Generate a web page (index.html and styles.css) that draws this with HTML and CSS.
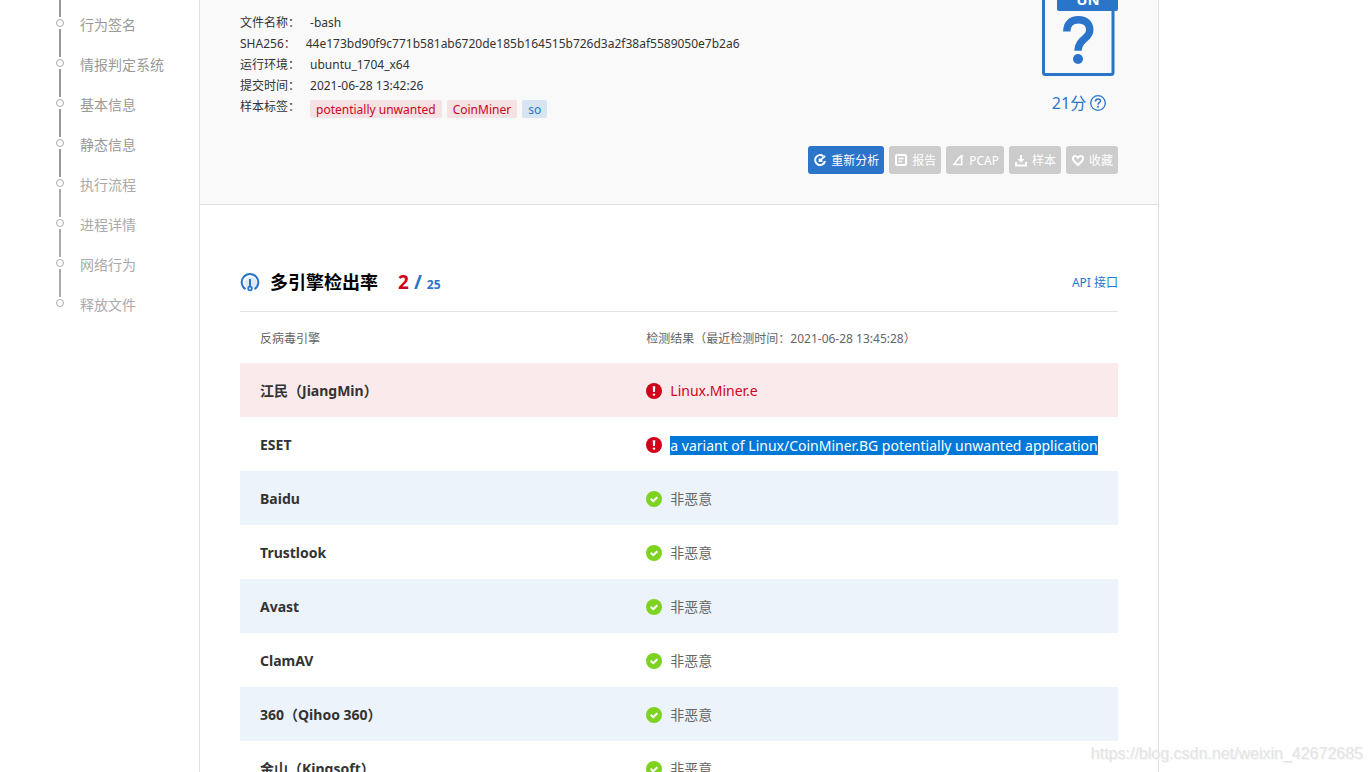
FILE: index.html
```html
<!DOCTYPE html>
<html lang="zh-CN">
<head>
<meta charset="utf-8">
<meta name="viewport" content="width=device-width, initial-scale=1">
<title>多引擎检出率</title>
<link rel="stylesheet" href="styles.css">
</head>
<body>
<svg class="sprite" aria-hidden="true">
  <symbol id="bad" viewBox="0 0 16 16"><circle cx="8" cy="8" r="8" fill="#d0021b"/><path d="M6.700 3.200h2.600l-.4 5.900H7.100z" fill="#fff"/><circle cx="8" cy="11.600" r="1.200" fill="#fff"/></symbol>
  <symbol id="good" viewBox="0 0 16 16"><circle cx="8" cy="8" r="8" fill="#7ed321"/><path d="M4.700 7.800l2.500 2.400 4.200-4" fill="none" stroke="#fff" stroke-width="2"/></symbol>
</svg>
<div class="page">
  <nav class="side">
    <div class="side-lead"></div>
    <ul class="steps">
      <li class="step"><a href="#">行为签名</a></li>
      <li class="step"><a href="#">情报判定系统</a></li>
      <li class="step"><a href="#">基本信息</a></li>
      <li class="step"><a href="#">静态信息</a></li>
      <li class="step pale"><a href="#">执行流程</a></li>
      <li class="step pale"><a href="#">进程详情</a></li>
      <li class="step pale"><a href="#">网络行为</a></li>
      <li class="step pale"><a href="#">释放文件</a></li>
    </ul>
  </nav>
  <main class="main">
    <header class="summary">
      <div class="summary-top">
        <dl class="facts">
          <div class="fact"><dt>文件名称：</dt><dd>-bash</dd></div>
          <div class="fact"><dt>SHA256：</dt><dd>44e173bd90f9c771b581ab6720de185b164515b726d3a2f38af5589050e7b2a6</dd></div>
          <div class="fact"><dt>运行环境：</dt><dd>ubuntu_1704_x64</dd></div>
          <div class="fact"><dt>提交时间：</dt><dd>2021-06-28 13:42:26</dd></div>
          <div class="fact"><dt>样本标签：</dt><dd class="tags"><span class="tag">potentially unwanted</span><span class="tag">CoinMiner</span><span class="tag tag-info">so</span></dd></div>
        </dl>
        <div class="verdict">
          <svg class="verdict-icon" viewBox="0 0 78 77" role="img" aria-label="未知">
            <path d="M3.500-4V72.500q0 2 2 2H71q2 0 2-2V-4" fill="none" stroke="#2a74ca" stroke-width="3"/>
            <path d="M17-4H78V9q0 2-2 2H19q-2 0-2-2z" fill="#2a74ca"/>
            <text x="48" y="5" text-anchor="middle" class="verdict-text">UN</text>
            <path d="M26.800 31.500C26.800 24 31 19.800 38.500 19.800S49.800 24 49.800 30C49.800 39 38 39 38 50.800" fill="none" stroke="#2a74ca" stroke-width="7.400"/>
            <circle cx="38" cy="59" r="5" fill="#2a74ca"/>
          </svg>
          <div class="score"><span>21分</span>
            <svg class="i16" viewBox="0 0 16 16"><circle cx="8" cy="8" r="7.300" fill="none" stroke="#2a74ca" stroke-width="1.300"/><path d="M5.500 6.400C5.500 4.700 6.600 3.900 8 3.900S10.500 4.800 10.500 6.100C10.500 7.700 8 7.700 8 9.700" fill="none" stroke="#2a74ca" stroke-width="1.500"/><circle cx="8" cy="11.700" r="1" fill="#2a74ca"/></svg>
          </div>
        </div>
      </div>
      <div class="actions">
        <button class="btn btn-primary"><svg class="i14" viewBox="0 0 14 14"><path d="M10.300 3.200A5 5 0 1 0 12 8" fill="none" stroke="#fff" stroke-width="2"/><path d="M6.800 7.700l5.400-4.700M6.500 5.500v2.700h3" fill="none" stroke="#fff" stroke-width="1.700"/></svg>重新分析</button>
        <button class="btn"><svg class="i14" viewBox="0 0 14 14"><rect x="2" y="2" width="10" height="10" rx="1" fill="none" stroke="#fff" stroke-width="2"/><path d="M4.500 5.500h5M4.500 8.500h3.500" stroke="#fff" stroke-width="1.500"/></svg>报告</button>
        <button class="btn"><svg class="i14" viewBox="0 0 14 14"><path d="M2.500 11.500C6 9.500 6 4.500 11 2.500Q10 7 11 11.500z" fill="none" stroke="#fff" stroke-width="1.600" stroke-linejoin="round"/></svg>PCAP</button>
        <button class="btn"><svg class="i14" viewBox="0 0 14 14"><path d="M2 9v3.500h10V9" fill="none" stroke="#fff" stroke-width="2"/><path d="M6 2h2v4h2.500L7 9.800 3.500 6H6z" fill="#fff"/></svg>样本</button>
        <button class="btn"><svg class="i14" viewBox="0 0 14 14"><path d="M7 12L2.700 7.700C.8 5.500 2 3 4.200 3 5.700 3 6.500 4 7 4.700 7.500 4 8.300 3 9.800 3 12 3 13.200 5.500 11.300 7.700z" fill="none" stroke="#fff" stroke-width="2"/></svg>收藏</button>
      </div>
    </header>
    <section class="engines">
      <div class="heading">
        <svg class="i20" viewBox="0 0 20 20"><circle cx="11" cy="11" r="6" fill="#dce9f7"/><path d="M5.500 17.200A8.300 8.300 0 1 1 14.500 17.200" fill="none" stroke="#2a74ca" stroke-width="2"/><path d="M10 7v8" stroke="#2a74ca" stroke-width="2"/><circle cx="10" cy="16.500" r="1.900" fill="#dce9f7" stroke="#2a74ca" stroke-width="1.600"/></svg>
        <h2>多引擎检出率</h2>
        <div class="rate"><span class="hit">2</span><span class="slash">/</span><span class="total">25</span></div>
        <a class="api" href="#">API 接口</a>
      </div>
      <table class="results">
        <thead><tr><th class="engine">反病毒引擎</th><th>检测结果（最近检测时间：2021-06-28 13:45:28）</th></tr></thead>
        <tbody>
          <tr class="danger"><td>江民（JiangMin）</td><td><div class="result"><svg class="i16"><use href="#bad"/></svg><span>Linux.Miner.e</span></div></td></tr>
          <tr><td>ESET</td><td><div class="result"><svg class="i16"><use href="#bad"/></svg><span class="selected">a variant of Linux/CoinMiner.BG potentially unwanted application</span></div></td></tr>
          <tr class="tint"><td>Baidu</td><td><div class="result"><svg class="i16"><use href="#good"/></svg><span>非恶意</span></div></td></tr>
          <tr><td>Trustlook</td><td><div class="result"><svg class="i16"><use href="#good"/></svg><span>非恶意</span></div></td></tr>
          <tr class="tint"><td>Avast</td><td><div class="result"><svg class="i16"><use href="#good"/></svg><span>非恶意</span></div></td></tr>
          <tr><td>ClamAV</td><td><div class="result"><svg class="i16"><use href="#good"/></svg><span>非恶意</span></div></td></tr>
          <tr class="tint"><td>360（Qihoo 360）</td><td><div class="result"><svg class="i16"><use href="#good"/></svg><span>非恶意</span></div></td></tr>
          <tr><td>金山（Kingsoft）</td><td><div class="result"><svg class="i16"><use href="#good"/></svg><span>非恶意</span></div></td></tr>
        </tbody>
      </table>
    </section>
  </main>
  <div class="watermark">https://blog.csdn.net/weixin_42672685</div>
</div>
</body>
</html>
```

FILE: styles.css
```css
* { box-sizing: border-box; }
body {
  margin: 0;
  background: #fff;
  color: #333;
  font: 12px/21px "Noto Sans", "Noto Sans CJK SC", sans-serif;
}
a { color: inherit; text-decoration: none; }
.sprite { display: none; }
.i14, .i16, .i20 { display: block; flex: none; }
.i14 { width: 14px; height: 14px; }
.i16 { width: 16px; height: 16px; }
.i20 { width: 20px; height: 20px; }

.page {
  position: relative;
  display: grid;
  grid-template-columns: 199px minmax(0, 960px);
  height: 100vh;
  overflow: hidden;
}

.side { padding-left: 56px; color: #999; }
.side-lead { width: 2px; height: 17px; margin-left: 3px; background: #999; }
.steps { list-style: none; margin: 0; padding: 0; }
.step {
  display: grid;
  grid-template-columns: 8px 1fr;
  grid-template-rows: 12px 28px;
  column-gap: 16px;
  justify-items: center;
  align-items: center;
}
.step::before {
  content: "";
  width: 6px;
  height: 6px;
  border: 1px solid #aaa;
  border-radius: 50%;
}
.step::after {
  content: "";
  grid-area: 2 / 1;
  width: 2px;
  height: 28px;
  background: #999;
}
.step:last-child::after { display: none; }
.step a {
  grid-area: 1 / 2 / 3 / 3;
  place-self: start;
  font-size: 14px;
  line-height: 16px;
}
.pale { color: #aaa; }
.pale::after { background: #aaa; }

.main {
  border: solid #e0e0e0;
  border-width: 0 1px;
}
.summary {
  padding: 0 40px 30px;
  background: #f9f9f9;
  border-bottom: 1px solid #e0e0e0;
}
.summary-top {
  display: flex;
  justify-content: space-between;
  min-height: 146px;
}
.facts { margin: 0; padding-top: 12px; }
.fact { display: flex; gap: 10px; height: 21px; }
.fact dt, .fact dd { margin: 0; }
.tags { display: flex; gap: 5px; padding-top: 4px; }
.tag {
  height: 18px;
  padding: 0 6px;
  border-radius: 2px;
  background: #f5e2e4;
  color: #d0021b;
  line-height: 20px;
}
.tag-info { background: #d8e4f1; color: #2a74ca; }
.verdict { display: flex; flex-direction: column; width: 78px; gap: 14px; }
.verdict-icon { display: block; width: 78px; height: 77px; }
.verdict-text { fill: #fff; font-size: 15px; font-weight: 700; }
.score {
  display: flex;
  justify-content: center;
  align-items: center;
  gap: 4px;
  color: #2a74ca;
  font-size: 16px;
  line-height: 24px;
}
.actions { display: flex; justify-content: flex-end; gap: 5px; }
.btn {
  display: flex;
  align-items: center;
  gap: 4px;
  height: 28px;
  padding: 0 5px;
  border: 0;
  border-radius: 3px;
  background: #ccc;
  color: #fff;
  font: inherit;
}
.btn-primary { background: #2a74ca; }

.engines { padding: 48px 40px 0; }
.heading {
  display: flex;
  align-items: center;
  height: 59px;
  border-bottom: 1px solid #e4e4e4;
}
.heading h2 {
  margin: 0 20px 0 10px;
  color: #000;
  font-size: 18px;
  font-weight: 700;
}
.rate {
  display: flex;
  align-items: baseline;
  gap: 5px;
  padding-top: 2px;
  color: #2a74ca;
  font-weight: 700;
  line-height: 24px;
}
.hit, .slash { font-size: 19px; }
.hit { color: #d0021b; }
.api { margin-left: auto; color: #2a74ca; }

.results {
  width: 100%;
  border-collapse: collapse;
  table-layout: fixed;
}
.results th {
  height: 51px;
  padding: 2px 20px 0;
  color: #666;
  font-weight: 400;
  text-align: left;
}
.results .engine { width: 44%; }
.results td {
  height: 54px;
  padding: 0 0 0 20px;
  font-size: 14px;
  font-weight: 700;
}
.result {
  display: flex;
  align-items: center;
  gap: 8px;
  padding-top: 2px;
  color: #666;
  font-weight: 400;
  line-height: 20px;
  white-space: nowrap;
}
.danger { background: #fbeaeb; }
.danger .result { color: #d0021b; }
.tint { background: #ecf3fb; }
.result .selected {
  align-self: flex-start;
  background: #0078d7;
  color: #fff;
  line-height: 19px;
}

.watermark {
  position: absolute;
  right: 9px;
  bottom: 8px;
  color: #e4e4e4;
  font: 16px/20px "Liberation Sans", Arial, sans-serif;
  text-shadow: 1px 1px 0 #f4f4f4;
}
```
